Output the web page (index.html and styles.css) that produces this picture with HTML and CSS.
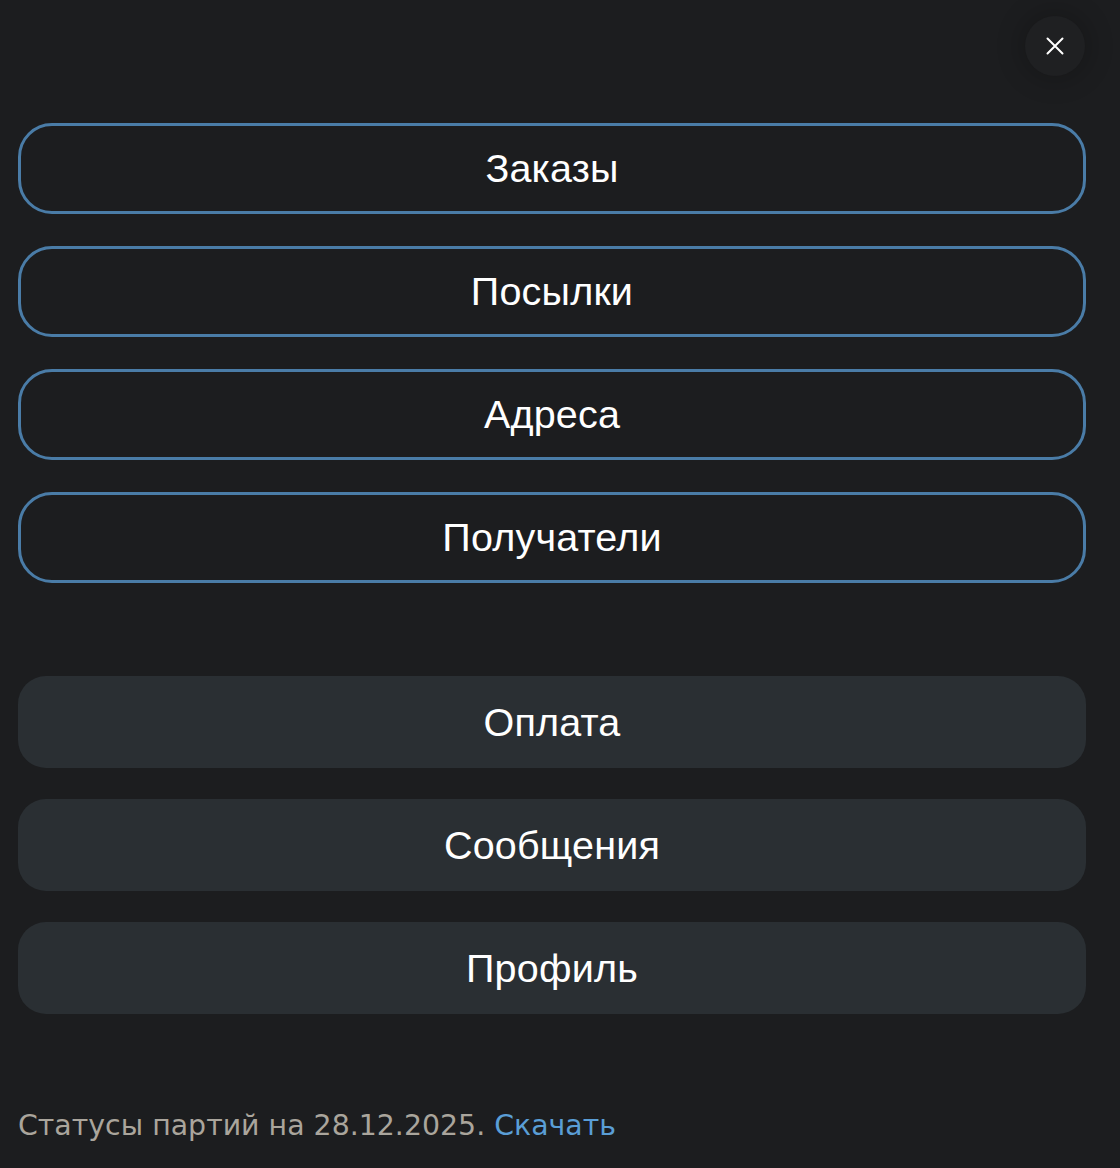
FILE: index.html
```html
<!DOCTYPE html>
<html lang="ru">
<head>
<meta charset="utf-8">
<title>Меню</title>
<link rel="stylesheet" href="styles.css">
</head>
<body>
<div class="menu">
  <div class="top">
    <button class="close" aria-label="Закрыть">
      <svg width="20" height="20" viewBox="0 0 20 20"><path d="M2.5 2.5 L17.5 17.5 M17.5 2.5 L2.5 17.5" stroke="#ffffff" stroke-width="2" stroke-linecap="round"/></svg>
    </button>
  </div>
  <nav class="group">
    <a class="btn outline">Заказы</a>
    <a class="btn outline">Посылки</a>
    <a class="btn outline">Адреса</a>
    <a class="btn outline">Получатели</a>
  </nav>
  <nav class="group second">
    <a class="btn filled">Оплата</a>
    <a class="btn filled">Сообщения</a>
    <a class="btn filled">Профиль</a>
  </nav>
  <p class="footer">Статусы партий на 28.12.2025. <a class="link">Скачать</a></p>
</div>
</body>
</html>
```
FILE: styles.css
```css
html, body {
  margin: 0;
  padding: 0;
  background: #1c1d1f;
}
body {
  font-family: "Liberation Sans", Arial, sans-serif;
  color: #ffffff;
}
.menu {
  width: 1068px;
  padding: 16px 34px 0 18px;
  display: flex;
  flex-direction: column;
}
.top {
  display: flex;
  justify-content: flex-end;
  height: 60px;
  padding-right: 1px;
}
.close {
  width: 60px;
  height: 60px;
  border-radius: 50%;
  border: none;
  background: #1f2022;
  box-shadow: 0 0 24px 6px rgba(0,0,0,0.18);
  display: flex;
  align-items: center;
  justify-content: center;
  padding: 0;
}
.close svg { width: 20px; height: 20px; }
.group {
  display: flex;
  flex-direction: column;
  gap: 32px;
}
.group:first-of-type { margin-top: 47px; }
.group.second { margin-top: 93px; }
.btn {
  height: 91px;
  box-sizing: border-box;
  display: flex;
  align-items: center;
  justify-content: center;
  font-size: 39.5px;
  color: #ffffff;
  letter-spacing: 0.2px;
}
.btn.outline {
  border: 3px solid #4a7ca7;
  border-radius: 34px;
}
.btn.filled {
  background: #2a2f33;
  border-radius: 28px;
  height: 92px;
  margin-bottom: -1px;
}
.footer {
  margin: 95px 0 0 0;
  font-family: "DejaVu Sans", Verdana, sans-serif;
  font-size: 28.4px;
  color: #aaa59c;
  line-height: 36px;
}
.link {
  color: #5a9ed6;
}
```
